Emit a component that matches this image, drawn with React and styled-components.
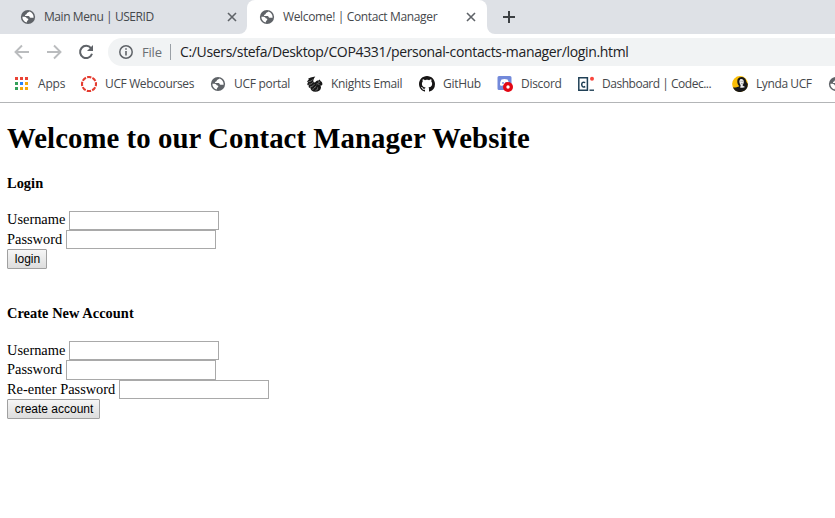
import React from 'react';
import styled, { createGlobalStyle } from 'styled-components';

const Global = createGlobalStyle`
  * { box-sizing: border-box; }
  body { margin: 0; background: #fff; overflow: hidden; }
`;

const Window = styled.div`
  width: 100%;
  height: 518px;
  overflow: hidden;
  background: #fff;
  font-family: "Open Sans", "Noto Sans", sans-serif;
  font-size: 12px;
  color: #45484c;
`;

const TabStrip = styled.div`
  display: flex;
  height: 34px;
  background: linear-gradient(#dee1e6 50%, #fff 50%);
`;

const Tab = styled.div`
  display: flex;
  align-items: center;
  width: ${p => (p.$active ? 240 : 247)}px;
  padding-left: ${p => (p.$active ? 12 : 20)}px;
  padding-right: ${p => (p.$active ? 11 : 10)}px;
  background: ${p => (p.$active ? '#fff' : '#dee1e6')};
  border-radius: ${p => (p.$active ? '8px 8px 0 0' : '0 0 8px 0')};
  box-shadow: ${p => (p.$active ? '0 -8px 0 8px #dee1e6' : 'none')};
  clip-path: inset(0);
`;

const StripEnd = styled.div`
  display: flex;
  flex: 1;
  align-items: center;
  padding-left: 15px;
  background: #dee1e6;
  border-bottom-left-radius: 8px;
`;

const Icon = styled.svg`
  display: block;
  flex: none;
  width: ${p => p.$size || 16}px;
  height: ${p => p.$size || 16}px;
`;

const Text = styled.span`
  flex: none;
  width: ${p => p.$width}px;
  white-space: nowrap;
  letter-spacing: ${p => p.$track || 0}px;
  line-height: 16px;
`;

const TabTitle = styled(Text)`
  margin-left: 8px;
  margin-right: auto;
`;

const Toolbar = styled.div`
  display: flex;
  align-items: center;
  height: 36px;
  padding-left: 12px;
  gap: 12px;
`;

const Omnibox = styled.div`
  display: flex;
  flex: 1;
  align-items: center;
  height: 28px;
  padding-left: 8px;
  background: #f1f3f4;
  border-radius: 14px 0 0 14px;
  font-size: 14px;
  color: #202124;
`;

const Scheme = styled(Text)`
  margin-left: 6px;
  color: #6a6e73;
  font-size: 13px;
`;

const Divider = styled.i`
  width: 1px;
  height: 16px;
  margin: 0 9px 0 7px;
  background: #9aa0a6;
`;

const Bookmarks = styled.div`
  display: flex;
  align-items: center;
  height: 33px;
  padding: 0 0 4px 13px;
  border-bottom: 1px solid #b3b5b7;
  overflow: hidden;
`;

const Bookmark = styled.div`
  display: flex;
  flex: none;
  align-items: center;
  width: ${p => p.$width}px;
  gap: ${p => p.$gap || 8}px;
`;

const Page = styled.main`
  padding: 0 7px;
  font-family: "Liberation Serif", serif;
  font-size: 14.4px;
  color: #000;
`;

const Heading = styled.h1`
  margin: 0;
  padding-top: 19px;
  height: 72px;
  font-size: 28.8px;
  line-height: 33px;
  letter-spacing: 0.06px;
`;

const Section = styled.section`
  height: 130px;
`;

const SubHeading = styled.h4`
  margin: 0;
  height: 36px;
  font-size: 14.4px;
  line-height: 17px;
  letter-spacing: 0.04px;
`;

const Field = styled.label`
  display: flex;
  align-items: flex-start;
  height: ${p => p.$height || 19}px;
  gap: 4px;
`;

const FieldName = styled.span`
  width: ${p => p.$width}px;
  white-space: nowrap;
  line-height: ${p => p.$line || 19}px;
`;

const Input = styled.input`
  width: 150px;
  height: ${p => p.$height || 19}px;
  padding: 1px;
  border: 1px solid #a9a9a9;
  border-radius: 0;
  background: #fff;
  outline: none;
`;

const Button = styled.button`
  display: block;
  width: ${p => p.$width}px;
  height: 20px;
  padding: 1px 0 0 1px;
  border: 1px solid #a0a0a0;
  border-radius: 1px;
  background: linear-gradient(#f6f6f6, #dddddd);
  color: #000;
  font: 12px/17px "Liberation Sans", sans-serif;
`;

const Globe = () => (
  <Icon viewBox="0 0 16 16">
    <circle cx="8" cy="8" r="7.100" fill="#5f6368" />
    <path d="M9.600 2.500C8.800 3.400 6.800 3.500 6.700 4.700c-.1.900-1.200.8-1.600 1.300-.4.600.1 1.100.9 1.100h2.600c.9 0 .9 1.700 1.900 1.700h3.100c.3-2.900-1.400-5.300-4-6.300zM2.400 7.800c1.200-.1 2.900 0 3.600.5.600.4.500 1.200 1.300 1.200.9 0 1.300.7.8 1.400-.7.800-1.300 1.100-1.400 2.600C4 12.900 2.200 10.400 2.400 7.800z" fill="#fff" />
  </Icon>
);

const Close = () => (
  <Icon $size={10} viewBox="0 0 10 10">
    <path d="M1 1l8 8M9 1L1 9" stroke="#5f6368" strokeWidth="1.6" />
  </Icon>
);

const Plus = () => (
  <Icon $size={14} viewBox="0 0 14 14">
    <path d="M7 1v12M1 7h12" stroke="#3c4043" strokeWidth="2" />
  </Icon>
);

const Arrow = ({ flip }) => (
  <Icon $size={20} viewBox="0 0 20 20">
    <path
      d={flip ? 'M3 10h13M10 3.500l6.500 6.500-6.500 6.500' : 'M17 10H4M10 3.500L3.500 10l6.500 6.500'}
      fill="none"
      stroke="#babcbe"
      strokeWidth="1.9"
    />
  </Icon>
);

const Reload = () => (
  <Icon $size={20} viewBox="0 0 20 20">
    <path d="M15 6.200A6.100 6.100 0 1 0 16 11.800" fill="none" stroke="#5f6368" strokeWidth="2" />
    <path d="M17 3v6h-6z" fill="#5f6368" />
  </Icon>
);

const Info = () => (
  <Icon $size={20} viewBox="0 0 20 20">
    <circle cx="10" cy="10" r="6.200" fill="none" stroke="#5f6368" strokeWidth="1.500" />
    <path d="M10 9v4.500M10 6.200v1.600" stroke="#5f6368" strokeWidth="1.600" />
  </Icon>
);

const Apps = () => {
  const colors = ['#ea4335', '#ea4335', '#ea4335', '#34a05a', '#2684fc', '#f5a90a', '#34a05a', '#f5a90a', '#f5a90a'];
  return (
    <Icon viewBox="0 0 16 16">
      {colors.map((c, i) => (
        <rect key={i} x={2 + (i % 3) * 5} y={1 + Math.floor(i / 3) * 5} width="3" height="3" fill={c} />
      ))}
    </Icon>
  );
};

const Canvas = () => (
  <Icon viewBox="0 0 16 16">
    <circle cx="8" cy="8" r="7" fill="none" stroke="#e43b2f" strokeWidth="2.100" strokeDasharray="4.300 1.198" strokeDashoffset="2.150" />
  </Icon>
);

const Pegasus = () => (
  <Icon viewBox="0 0 16 16">
    <path d="M8.300.4C5 .8 2 1.700.9 3.100l1.200.3C.9 4 .1 5 .2 6.100l1.100-.2C.4 7 .1 8.200.6 9.300l1.100-.6c-.3 1.300 0 2.500.7 3.300l.8-.8c.2 2.500 2 4.600 5.200 4.600 3 0 5.300-1.600 5.600-4 .1-1-.2-1.700-.9-2.200 1.200.3 2.200-.3 2.300-1.400.1-1.200-.7-2.400-2-3.100.1-.8-.3-1.400-1-1.700-.2.700-.8 1-1.600 1.100-1.400.2-2.200 1.300-2.900 1.900-1.200 0-2-.8-1.500-2.300C6.700 2.700 7.300 1.400 8.300.4z" fill="#171717" />
    <path d="M1.400 5.500c2 .2 3-.6 4.300-1.800M1.900 8.200c2 .2 3.200-.8 4.300-2M2.900 10.900c2 0 3.200-1.200 4.500-2.600M5.300 13.300c1.900-.2 2.300-2.200 4-3.400M8.500 14.300c1.900-.1 2.200-1.500 2.200-2.900M9.500 8c1.200-.6 2.300-.2 3.100 1.100" fill="none" stroke="#fff" strokeWidth=".4" />
    <circle cx="12" cy="6" r=".6" fill="#fff" />
  </Icon>
);

const GitHub = () => (
  <Icon viewBox="0 0 16 16">
    <path fill="#171515" d="M8 0C3.580 0 0 3.580 0 8c0 3.540 2.290 6.530 5.470 7.590.4.070.55-.17.55-.38 0-.19-.01-.82-.01-1.490-2.010.37-2.530-.49-2.690-.94-.09-.23-.48-.94-.82-1.130-.28-.15-.68-.52-.01-.53.63-.01 1.080.58 1.230.82.72 1.210 1.870.87 2.330.66.07-.52.28-.87.51-1.070-1.780-.2-3.640-.89-3.640-3.950 0-.87.31-1.590.82-2.150-.08-.2-.36-1.020.08-2.120 0 0 .67-.21 2.200.82.64-.18 1.320-.27 2-.27s1.360.09 2 .27c1.530-1.040 2.200-.82 2.200-.82.44 1.100.16 1.920.08 2.120.51.56.82 1.270.82 2.150 0 3.070-1.870 3.750-3.650 3.950.29.25.54.73.54 1.480 0 1.070-.01 1.930-.01 2.200 0 .21.15.46.55.38A8.010 8.010 0 0 0 16 8c0-4.420-3.580-8-8-8z" />
  </Icon>
);

const Discord = () => (
  <Icon viewBox="0 0 16 16">
    <path d="M2 0h11a1.500 1.500 0 0 1 1.500 1.500V14H2A1.500 1.500 0 0 1 .5 12.500v-11A1.500 1.500 0 0 1 2 0z" fill="#7289da" />
    <path d="M4.500 3.500c2-.8 4-.8 6 0 1 1.500 1.500 3 1.500 5.500-1 1-2 1-2.500.5h-4C5 10 4 10 3 9c0-2.500.5-4 1.500-5.500z" fill="#fff" />
    <circle cx="6" cy="7" r=".9" fill="#7289da" />
    <circle cx="9" cy="7" r=".9" fill="#7289da" />
    <circle cx="11" cy="11" r="5" fill="#e30613" />
    <circle cx="11" cy="11" r="1.700" fill="#fff" />
  </Icon>
);

const Codecademy = () => (
  <Icon viewBox="0 0 16 16">
    <path d="M.8 1.800h8.600v12.400H.8z" fill="none" stroke="#204056" strokeWidth="1.500" />
    <path d="M7.200 6.700C5.600 5.700 3.700 6.200 3.700 8.600s1.900 2.900 3.500 1.900" fill="none" stroke="#204056" strokeWidth="1.500" />
    <path d="M11.500 14.200H16" stroke="#204056" strokeWidth="1.400" />
    <circle cx="14" cy="2.800" r="2" fill="#f9453d" />
  </Icon>
);

const Lynda = () => (
  <Icon viewBox="0 0 16 16">
    <circle cx="8" cy="8" r="7.900" fill="#f9bd06" />
    <path d="M7.300 1.500C10 0 13.500 1.500 14 4.500c.2 1.500 1.200 2.800 1.900 3.500a7.900 7.900 0 0 1-15 3.500c2 .3 4.500-.3 6.500-1.300C6 9 5.200 7.500 5.300 5.200 5.300 3.500 6 2.200 7.300 1.500z" fill="#171717" />
    <path d="M8.200 3.300c1.700-.8 3.600.2 3.600 2.300 0 1.700-.6 2.900-1.400 3.400.3.800 1.500 1.500 2.700 2-1.500.9-3.700 1-5.300.2.800-.6 1-1.500.7-2.300C7.300 7.500 6.800 4.600 8.200 3.300z" fill="#eee" />
    <path d="M8.600 5.300h.9M10.300 5.300h.9M9.300 7.500h1.200" stroke="#444" strokeWidth=".6" />
  </Icon>
);

const bookmarks = [
  { icon: Apps, label: 'Apps', width: 68, text: 27, track: -0.2, gap: 9 },
  { icon: Canvas, label: 'UCF Webcourses', width: 129, text: 89, track: -0.37 },
  { icon: Globe, label: 'UCF portal', width: 97, text: 57, track: -0.3 },
  { icon: Pegasus, label: 'Knights Email', width: 112, text: 72, track: -0.3 },
  { icon: GitHub, label: 'GitHub', width: 78, text: 38, track: -0.3 },
  { icon: Discord, label: 'Discord', width: 81, text: 41, track: -0.3 },
  { icon: Codecademy, label: 'Dashboard | Codec...', width: 154, text: 110, track: -0.48 },
  { icon: Lynda, label: 'Lynda UCF', width: 96, text: 56, track: -0.4 },
  { icon: Globe, label: '', width: 24, text: 0, track: 0 },
];

export default function App() {
  return (
    <Window>
      <Global />
      <TabStrip>
        <Tab>
          <Globe />
          <TabTitle $width={120} $track={-0.43}>Main Menu | USERID</TabTitle>
          <Close />
        </Tab>
        <Tab $active>
          <Globe />
          <TabTitle $width={165} $track={-0.36}>Welcome! | Contact Manager</TabTitle>
          <Close />
        </Tab>
        <StripEnd><Plus /></StripEnd>
      </TabStrip>
      <Toolbar>
        <Arrow />
        <Arrow flip />
        <Reload />
        <Omnibox>
          <Info />
          <Scheme $width={21} $track={-0.2}>File</Scheme>
          <Divider />
          <Text $width={460} $track={-0.34}>C:/Users/stefa/Desktop/COP4331/personal-contacts-manager/login.html</Text>
        </Omnibox>
      </Toolbar>
      <Bookmarks>
        {bookmarks.map(({ icon: Mark, label, width, text, track, gap }, i) => (
          <Bookmark key={i} $width={width} $gap={gap}>
            <Mark />
            <Text $width={text} $track={track}>{label}</Text>
          </Bookmark>
        ))}
      </Bookmarks>
      <Page>
        <Heading>Welcome to our Contact Manager Website</Heading>
        <Section>
          <SubHeading>Login</SubHeading>
          <Field><FieldName $width={58} $line={17}>Username</FieldName><Input /></Field>
          <Field><FieldName $width={55}>Password</FieldName><Input /></Field>
          <Button $width={40}>login</Button>
        </Section>
        <Section>
          <SubHeading>Create New Account</SubHeading>
          <Field><FieldName $width={58}>Username</FieldName><Input /></Field>
          <Field $height={20}><FieldName $width={55}>Password</FieldName><Input $height={20} /></Field>
          <Field><FieldName $width={108}>Re-enter Password</FieldName><Input /></Field>
          <Button $width={93}>create account</Button>
        </Section>
      </Page>
    </Window>
  );
}
